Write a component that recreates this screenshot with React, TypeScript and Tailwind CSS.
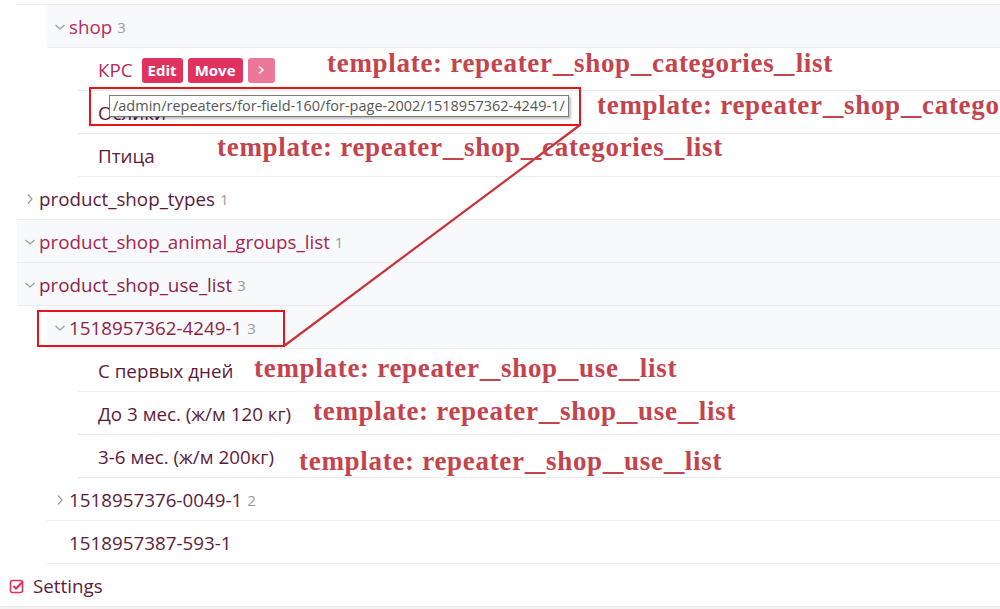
import type { ReactNode } from "react";

const ui = "font-['Open_Sans','Noto_Sans',sans-serif]";

// red hand-written style notes laid over the screenshot
function Note({ text, className }: { text: string; className: string }) {
  const parts = text.split("_");
  return (
    <span
      className={`pointer-events-none absolute whitespace-nowrap font-['Liberation_Serif',serif] text-[27px] font-bold leading-none tracking-[0.7px] text-[#c4434d] ${className}`}
    >
      {parts.map((p, i) => (
        <span key={i}>
          {p}
          {i < parts.length - 1 && <span className="mr-[7px] inline-block origin-left scale-x-150">_</span>}
        </span>
      ))}
    </span>
  );
}

function Chevron({ open }: { open: boolean }) {
  return (
    <svg width="16" height="16" viewBox="0 0 16 16" className="shrink-0">
      {open ? (
        <polyline points="3.5,6 8,10 12.5,6" fill="none" stroke="#9a9a9a" strokeWidth="1.2" />
      ) : (
        <polyline points="6,3.5 10,8 6,12.5" fill="none" stroke="#9a9a9a" strokeWidth="1.2" />
      )}
    </svg>
  );
}

function Row({
  children,
  gray,
  pad = "pl-[5px]",
}: {
  children: ReactNode;
  gray?: boolean;
  pad?: string;
}) {
  return (
    <div
      className={`flex h-[43px] items-center border-b border-[#eaecef] pt-[2px] ${pad} ${
        gray ? "bg-[#f8f9fa]" : "bg-white"
      }`}
    >
      {children}
    </div>
  );
}

function Count({ n }: { n: number }) {
  return <span className="ml-[5px] text-[15px] text-[#9b9b9b]">{n}</span>;
}

function Branch({ label, n, open, color }: { label: string; n: number; open: boolean; color: string }) {
  return (
    <Row gray={open}>
      <Chevron open={open} />
      <span className={`ml-px ${color}`}>{label}</span>
      <Count n={n} />
    </Row>
  );
}

function Leaf({ label, pad = "pl-[20px]" }: { label: string; pad?: string }) {
  return (
    <Row pad={pad}>
      <span className="text-[#5e1a3b]">{label}</span>
    </Row>
  );
}

export default function App() {
  return (
    <div className={`relative h-[609px] w-[1000px] overflow-hidden bg-[#f4f4f4] text-[18.8px] ${ui}`}>
      <div className="bg-white">
        <div className="ml-[17px]">
          <div className="h-[5px] border-b border-[#eaecef]" />

          <div className="ml-[30px]">
            <Branch label="shop" n={3} open color="text-[#b92c58]" />
            <div className="ml-[31px]">
              <Row pad="pl-[20px]">
                <span className="text-[#b5295a]">КРС</span>
                <div className="ml-[9px] flex gap-[5px] text-[15px] font-bold text-white">
                  <span className="flex h-[25px] w-[41px] items-center justify-center rounded-[3px] bg-[#e0325f]">
                    Edit
                  </span>
                  <span className="flex h-[25px] w-[55px] items-center justify-center rounded-[3px] bg-[#e0325f]">
                    Move
                  </span>
                  <span className="flex h-[25px] w-[27px] items-center justify-center rounded-[3px] bg-[#ec7797]">
                    <svg width="10" height="10" viewBox="0 0 10 10">
                      <polyline points="3,1.5 7,5 3,8.5" fill="none" stroke="white" strokeWidth="1.6" />
                    </svg>
                  </span>
                </div>
              </Row>
              <Leaf label="Ослики" />
              <Leaf label="Птица" />
            </div>
          </div>

          <Branch label="product_shop_types" n={1} open={false} color="text-[#5e1a3b]" />
          <Branch label="product_shop_animal_groups_list" n={1} open color="text-[#a7244f]" />
          <Branch label="product_shop_use_list" n={3} open color="text-[#8e1e47]" />

          <div className="ml-[30px]">
            <Branch label="1518957362-4249-1" n={3} open color="text-[#8e1e47]" />
            <div className="ml-[31px]">
              <Leaf label="С первых дней" />
              <Leaf label="До 3 мес. (ж/м 120 кг)" />
              <Leaf label="3-6 мес. (ж/м 200кг)" />
            </div>
            <Row>
              <Chevron open={false} />
              <span className="ml-px text-[#5e1a3b]">1518957376-0049-1</span>
              <Count n={2} />
            </Row>
            <Leaf label="1518957387-593-1" pad="pl-[22px]" />
          </div>
        </div>

        <div className="flex h-[43px] items-center border-b border-[#e6e6e6] pl-[9px] pt-[2px]">
          <svg width="16" height="16" viewBox="0 0 16 16" className="shrink-0">
            <rect x="1.5" y="2.5" width="12" height="12" rx="2" fill="none" stroke="#e0325f" strokeWidth="1.6" />
            <polyline points="4.5,8 7,10.5 14,3.5" fill="none" stroke="#e0325f" strokeWidth="2.2" />
          </svg>
          <span className="ml-[8px] text-[#5e1a3b]">Settings</span>
        </div>
      </div>

      {/* tooltip over the "Ослики" row */}
      <div className="absolute left-[109px] top-[95px] flex h-[22px] w-[460px] items-center border border-[#7a7a7a] bg-white pl-[3px] text-[14.5px] text-[#555] shadow-[2px_2px_2px_rgba(0,0,0,0.25)]">
        /admin/repeaters/for-field-160/for-page-2002/1518957362-4249-1/
      </div>

      <div className="pointer-events-none absolute left-[89px] top-[87px] h-[39px] w-[492px] border-2 border-[#e3141c]" />
      <div className="pointer-events-none absolute left-[37px] top-[310px] h-[37px] w-[248px] border-2 border-[#e3141c]" />
      <svg className="pointer-events-none absolute left-0 top-0" width="1000" height="609">
        <line x1="580" y1="125" x2="284" y2="346" stroke="#cc3039" strokeWidth="2.2" />
      </svg>

      <Note text="template: repeater_shop_categories_list" className="left-[327px] top-[50px]" />
      <Note text="template: repeater_shop_categories_list" className="left-[597px] top-[92px]" />
      <Note text="template: repeater_shop_categories_list" className="left-[217px] top-[134px]" />
      <Note text="template: repeater_shop_use_list" className="left-[254px] top-[355px]" />
      <Note text="template: repeater_shop_use_list" className="left-[313px] top-[398px]" />
      <Note text="template: repeater_shop_use_list" className="left-[299px] top-[448px]" />
    </div>
  );
}
